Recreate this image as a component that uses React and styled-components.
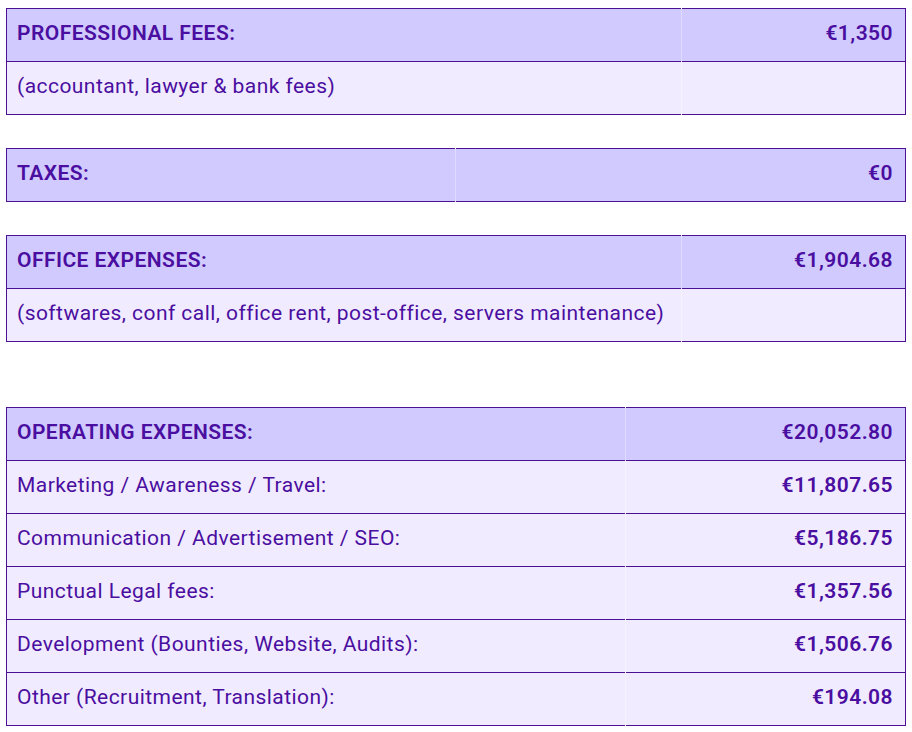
import React from 'react';
import styled, { createGlobalStyle } from 'styled-components';

const GlobalStyle = createGlobalStyle`
  body {
    margin: 0;
    background: #ffffff;
    font-family: Roboto, "Liberation Sans", sans-serif;
  }
`;

const Page = styled.div`
  display: flex;
  flex-flow: column;
  padding: 8px 6px;
  gap: 33px;
`;

const Table = styled.table`
  width: 900px;
  border-collapse: collapse;
  border: 1px solid #4a1292;
  table-layout: fixed;
  ${props => props.spaced && `
    margin-top: 32px;
  `}
`;

const Row = styled.tr`
  height: 53px;
  border-top: 1px solid #4a1292;
  background-color: ${props => (props.head ? '#d1caff' : '#f1ebff')};
`;

const Label = styled.td`
  padding: 0 10px 4px;
  font-size: 21px;
  letter-spacing: 0.45px;
  color: #4a0ea0;
  font-weight: ${props => (props.bold ? 600 : 400)};
  white-space: nowrap;
`;

const Amount = styled.td`
  padding: 0 12px 4px;
  font-size: 21px;
  letter-spacing: 0.45px;
  color: #4a0ea0;
  font-weight: 600;
  text-align: right;
  border-left: 1px solid rgba(255, 255, 255, 0.3);
  width: ${props => props.width}px;
`;

const sections = [
  {
    title: 'PROFESSIONAL FEES:',
    total: '€1,350',
    amountWidth: 199,
    note: '(accountant, lawyer & bank fees)',
  },
  {
    title: 'TAXES:',
    total: '€0',
    amountWidth: 425,
  },
  {
    title: 'OFFICE EXPENSES:',
    total: '€1,904.68',
    amountWidth: 199,
    note: '(softwares, conf call, office rent, post-office, servers maintenance)',
  },
];

const operating = [
  ['Marketing / Awareness / Travel:', '€11,807.65'],
  ['Communication / Advertisement / SEO:', '€5,186.75'],
  ['Punctual Legal fees:', '€1,357.56'],
  ['Development (Bounties, Website, Audits):', '€1,506.76'],
  ['Other (Recruitment, Translation):', '€194.08'],
];

export default function App() {
  return (
    <Page>
      <GlobalStyle />
      {sections.map(s => (
        <Table key={s.title}>
          <tbody>
            <Row head>
              <Label bold>{s.title}</Label>
              <Amount width={s.amountWidth}>{s.total}</Amount>
            </Row>
            {s.note && (
              <Row>
                <Label>{s.note}</Label>
                <Amount width={s.amountWidth} />
              </Row>
            )}
          </tbody>
        </Table>
      ))}
      <Table spaced>
        <tbody>
          <Row head>
            <Label bold>OPERATING EXPENSES:</Label>
            <Amount width={255}>€20,052.80</Amount>
          </Row>
          {operating.map(([label, value]) => (
            <Row key={label}>
              <Label>{label}</Label>
              <Amount width={255}>{value}</Amount>
            </Row>
          ))}
        </tbody>
      </Table>
    </Page>
  );
}
